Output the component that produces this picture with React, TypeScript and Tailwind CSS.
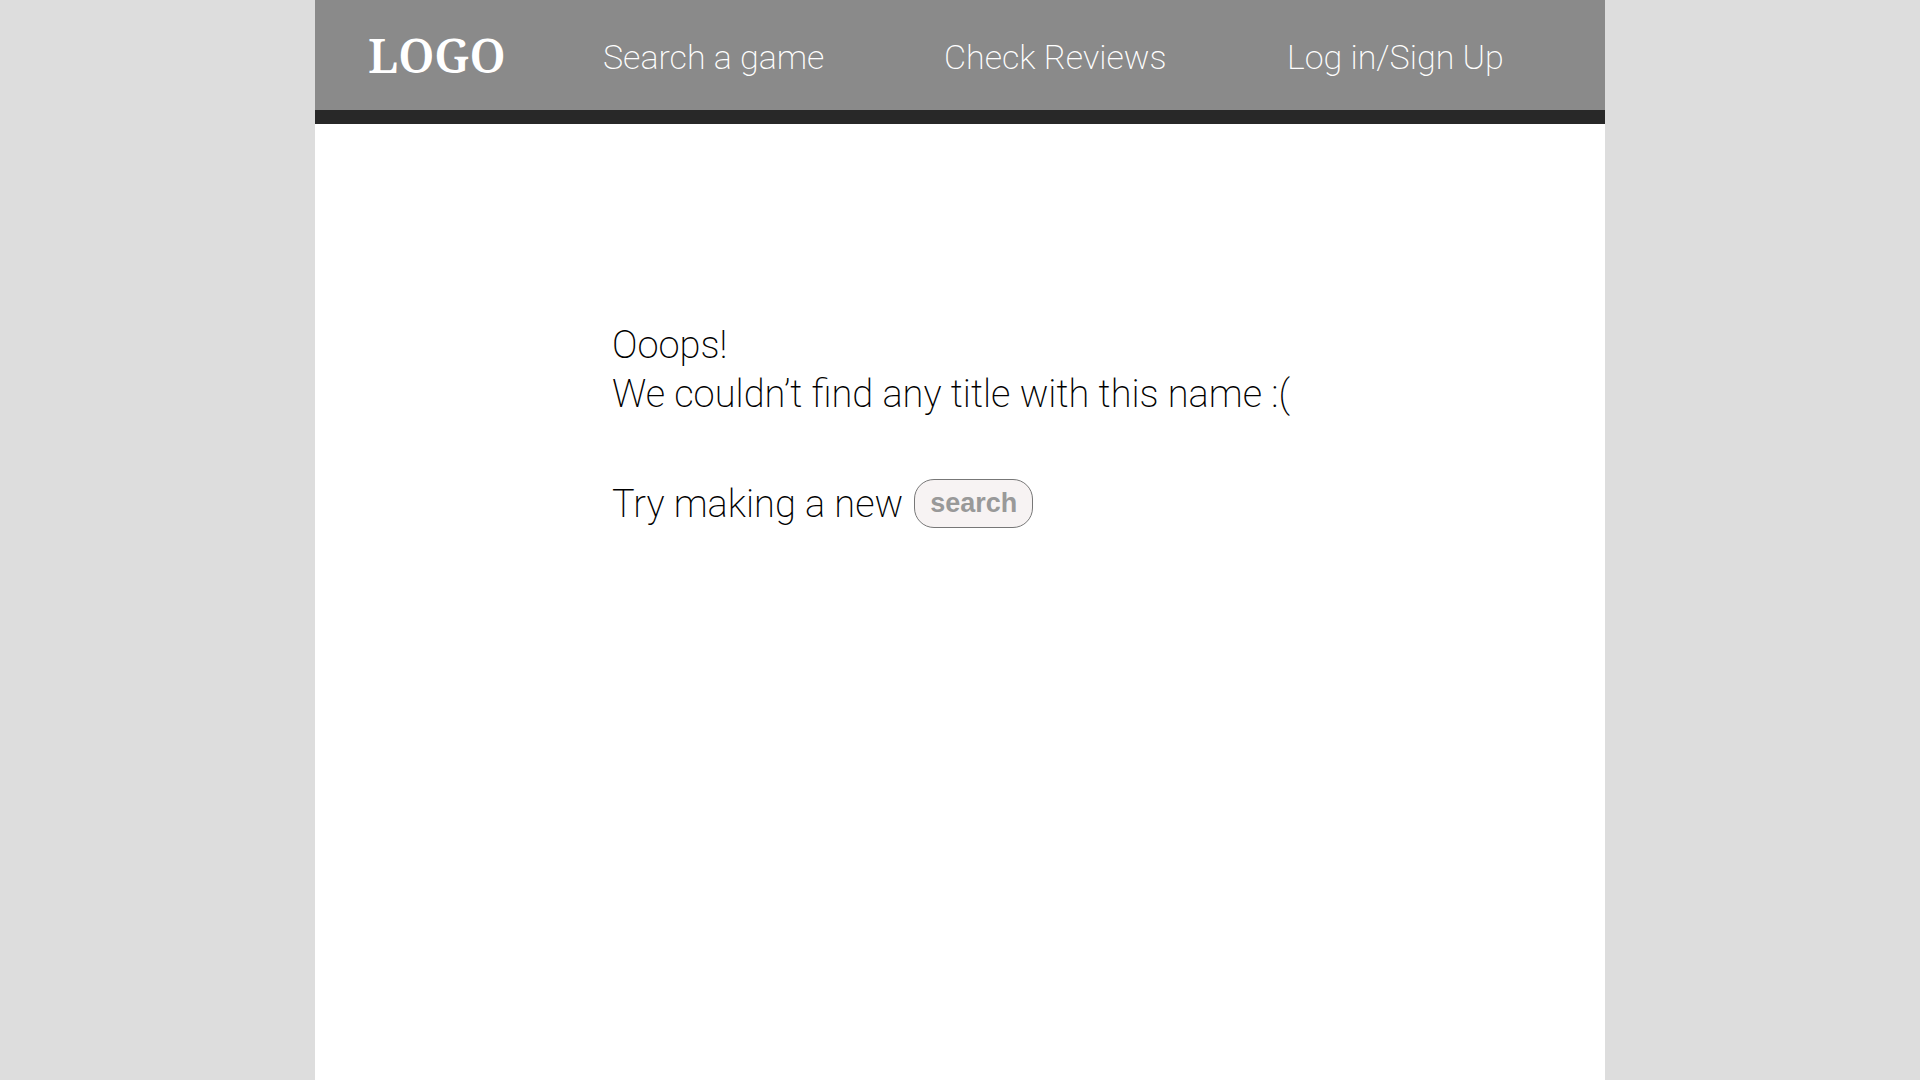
const nav = "font-['Roboto',sans-serif] font-extralight text-[34px] leading-10 text-white whitespace-nowrap";

export default function App() {
  return (
    <div className="min-h-screen bg-[#dddddd]">
      <div className="mx-auto flex min-h-screen max-w-[1290px] flex-col bg-white">
        <header className="flex items-center border-b-[14px] border-[#282828] bg-[#8a8a8a] py-[30px] pl-[53px]">
          <a href="#" className="w-[235px] font-['Noto_Serif','Liberation_Serif',serif] text-[47px] font-semibold leading-[50px] text-white">LOGO</a>
          <nav className="flex pt-1">
            <a href="#search" className={`w-[341px] ${nav}`}>Search a game</a>
            <a href="#reviews" className={`w-[343px] ${nav}`}>Check Reviews</a>
            <a href="#login" className={nav}>Log in/Sign Up</a>
          </nav>
        </header>
        <main className="pl-[297px] pt-[197px] font-['Roboto',sans-serif] text-[38px] font-extralight leading-[49px] text-black">
          <p>Ooops!</p>
          <p className="whitespace-nowrap">We couldn’t find any title with this name :(</p>
          <div className="mt-[59px] flex items-center gap-[11px]">
            <p className="whitespace-nowrap pt-[2px]">Try making a new</p>
            <button type="button" className="h-[49px] rounded-[20px] border border-[#777777] bg-[#f7f3f3] px-[15px] font-['Liberation_Sans',sans-serif] text-[27px] font-bold leading-none text-[#999999]">search</button>
          </div>
        </main>
      </div>
    </div>
  );
}
